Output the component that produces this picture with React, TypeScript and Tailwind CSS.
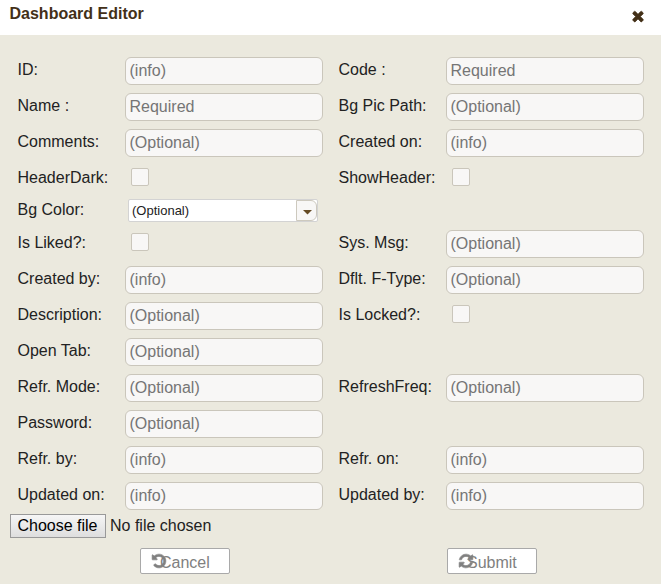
type FieldProps = { label?: string; hint?: string; kind?: 'text' | 'check' | 'select' | 'none' };

const ICONS = {
  close:
    'M1490 1322q0 40-28 68l-136 136q-28 28-68 28t-68-28l-294-294-294 294q-28 28-68 28t-68-28l-136-136q-28-28-28-68t28-68l294-294-294-294q-28-28-28-68t28-68l136-136q28-28 68-28t68 28l294 294 294-294q28-28 68-28t68 28l136 136q28 28 28 68t-28 68l-294 294 294 294q28 28 28 68z',
  undo: 'M1664 896q0 156-61 298t-164 245-245 164-298 61q-172 0-327-72.5t-264-204.5q-7-10-6.5-22.5t8.5-20.5l137-138q10-9 25-9 16 2 23 12 73 95 179 147t225 52q104 0 198.5-40.5t163.5-109.5 109.5-163.5 40.5-198.5-40.5-198.5-109.5-163.5-163.5-109.5-198.5-40.5q-98 0-188 35.5t-160 101.5l137 138q31 30 14 69-17 40-59 40h-448q-26 0-45-19t-19-45v-448q0-42 40-59 39-17 69 14l130 129q107-101 244.5-156.5t284.5-55.5q156 0 298 61t245 164 164 245 61 298z',
  refresh:
    'M1639 1056q0 5-1 7-64 268-268 434.5t-478 166.5q-146 0-282.5-55t-243.5-157l-129 129q-19 19-45 19t-45-19-19-45v-448q0-26 19-45t45-19h448q26 0 45 19t19 45-19 45l-137 137q71 66 161 102t187 36q134 0 250-65t186-179q11-17 53-117 8-23 30-23h192q13 0 22.5 9.5t9.5 22.5zm25-800v448q0 26-19 45t-45 19h-448q-26 0-45-19t-19-45 19-45l138-138q-148-137-349-137-134 0-250 65t-186 179q-11 17-53 117-8 23-30 23h-199q-13 0-22.5-9.5t-9.5-22.5v-7q65-268 270-434.5t480-166.5q146 0 284 55.5t245 156.5l130-129q19-19 45-19t45 19 19 45z',
};

function Icon({ name, className }: { name: keyof typeof ICONS; className: string }) {
  return (
    <svg
      viewBox="0 0 1792 1792"
      fill="currentColor"
      stroke="currentColor"
      strokeWidth={70}
      strokeLinejoin="round"
      className={className}
      aria-hidden="true"
    >
      <path d={ICONS[name]} />
    </svg>
  );
}

function Control({ label, hint, kind = 'text' }: FieldProps) {
  if (kind === 'check') {
    return (
      <input
        type="checkbox"
        aria-label={label}
        className="mt-[3px] ml-1.5 block h-[18px] w-[18px] appearance-none rounded-[2px] border border-[#cac6bb] bg-[#f8f7f6]"
      />
    );
  }
  if (kind === 'select') {
    return (
      <div className="mt-0.5 ml-[3px] flex h-[23px] w-[190px] rounded-[2px] border border-[#d3d3d3] bg-white text-[13px] text-[#222]">
        <span className="flex-1 pl-[3px] leading-[21px]">{hint}</span>
        <button aria-label="Open list" className="flex w-[21px] items-center justify-center rounded-r-md border border-[#cdc9be] bg-[#f8f7f6]">
          <svg viewBox="0 0 9 5" className="mt-[3px] ml-0.5 h-[5px] w-[9px]" fill="#654b24">
            <path d="M0 0h9L4.5 4.5z" />
          </svg>
        </button>
      </div>
    );
  }
  return (
    <input
      aria-label={label}
      placeholder={hint}
      className="block h-7 w-[198px] rounded-md border border-[#cac6bb] bg-[#f8f7f6] px-[3.5px] text-base placeholder:text-[#757575]"
    />
  );
}

function Field(props: FieldProps) {
  if (props.kind === 'none') return <div />;
  return (
    <div className="flex">
      <label className="w-[107.5px] shrink-0 whitespace-nowrap pt-px leading-6">{props.label}</label>
      <Control {...props} />
    </div>
  );
}

const OPT = '(Optional)';
const INFO = '(info)';
const NONE: FieldProps = { kind: 'none' };

const rows: { height?: string; fields: [FieldProps, FieldProps] }[] = [
  { fields: [{ label: 'ID:', hint: INFO }, { label: 'Code :', hint: 'Required' }] },
  { fields: [{ label: 'Name :', hint: 'Required' }, { label: 'Bg Pic Path:', hint: OPT }] },
  { fields: [{ label: 'Comments:', hint: OPT }, { label: 'Created on:', hint: INFO }] },
  { height: 'h-8', fields: [{ label: 'HeaderDark:', kind: 'check' }, { label: 'ShowHeader:', kind: 'check' }] },
  { height: 'h-[33px]', fields: [{ label: 'Bg Color:', hint: OPT, kind: 'select' }, NONE] },
  { fields: [{ label: 'Is Liked?:', kind: 'check' }, { label: 'Sys. Msg:', hint: OPT }] },
  { fields: [{ label: 'Created by:', hint: INFO }, { label: 'Dflt. F-Type:', hint: OPT }] },
  { fields: [{ label: 'Description:', hint: OPT }, { label: 'Is Locked?:', kind: 'check' }] },
  { fields: [{ label: 'Open Tab:', hint: OPT }, NONE] },
  { fields: [{ label: 'Refr. Mode:', hint: OPT }, { label: 'RefreshFreq:', hint: OPT }] },
  { fields: [{ label: 'Password:', hint: OPT }, NONE] },
  { fields: [{ label: 'Refr. by:', hint: INFO }, { label: 'Refr. on:', hint: INFO }] },
  { height: 'h-8', fields: [{ label: 'Updated on:', hint: INFO }, { label: 'Updated by:', hint: INFO }] },
];

function ActionButton({ icon, label }: { icon: keyof typeof ICONS; label: string }) {
  return (
    <button className="flex h-[26px] w-[90px] items-center rounded-[2px] border border-[#a9a9a9] bg-white pl-[10px] text-[#808080]">
      <Icon name={icon} className="h-4 w-4 shrink-0" />
      <span className="-ml-[7px] pt-[3px] leading-5">{label}</span>
    </button>
  );
}

export default function App() {
  return (
    <div className="h-[584px] w-[661px] overflow-hidden bg-[#ebe9de] font-['Liberation_Sans',Arial,sans-serif] text-base text-[#222]">
      <header className="flex h-[35px] justify-between bg-white pr-[15px] pl-[9.5px] text-[#433018]">
        <h1 className="pt-0.5 font-bold leading-6">Dashboard Editor</h1>
        <button aria-label="Close" className="mt-2 h-4 w-4">
          <Icon name="close" className="h-4 w-4" />
        </button>
      </header>
      <main className="pt-[22px]">
        <div className="pl-[17.5px]">
          {rows.map((row, i) => (
            <div key={i} className={`grid grid-cols-[321px_306px] ${row.height ?? 'h-9'}`}>
              <Field {...row.fields[0]} />
              <Field {...row.fields[1]} />
            </div>
          ))}
        </div>
        <div className="flex pl-2.5">
          <button className="h-6 w-24 border border-[#999] bg-gradient-to-b from-[#f6f6f6] to-[#dedede] pr-px leading-[22px] text-black">
            Choose file
          </button>
          <span className="pl-1 leading-6">No file chosen</span>
        </div>
        <footer className="flex gap-[217px] pt-[10px] pl-[140px]">
          <ActionButton icon="undo" label="Cancel" />
          <ActionButton icon="refresh" label="Submit" />
        </footer>
      </main>
    </div>
  );
}
